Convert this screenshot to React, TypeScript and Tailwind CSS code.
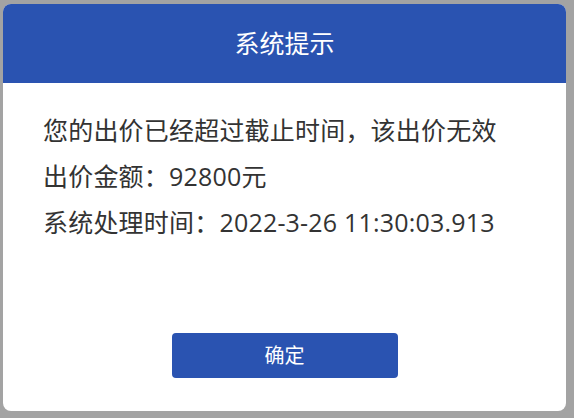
export default function App() {
  const lines = [
    "您的出价已经超过截止时间，该出价无效",
    "出价金额：92800元",
    "系统处理时间：2022-3-26 11:30:03.913",
  ];

  return (
    <div
      className="h-[418px] w-[574px] overflow-hidden bg-[#a3a3a3] pt-[4px] pl-[3px]"
      style={{ fontFamily: '"Open Sans", "Noto Sans CJK SC", sans-serif' }}
    >
      <div className="flex h-[407px] w-[563px] flex-col overflow-hidden rounded-[8px] bg-white">
        {/* Header */}
        <div className="flex h-[79px] items-center justify-center bg-[#2a53b1] text-[25px] text-white">
          系统提示
        </div>

        {/* Body */}
        <div className="flex-1 pl-[40px] pt-[24px] text-[25px] leading-[46px] tracking-[0.2px] text-[#333333]">
          {lines.map((line, i) => (
            <p key={i}>{line}</p>
          ))}
        </div>

        {/* Footer */}
        <div className="flex justify-center pb-[33px]">
          <button className="h-[45px] w-[226px] rounded-[4px] bg-[#2a53b1] text-[20px] text-white">
            确定
          </button>
        </div>
      </div>
    </div>
  );
}
